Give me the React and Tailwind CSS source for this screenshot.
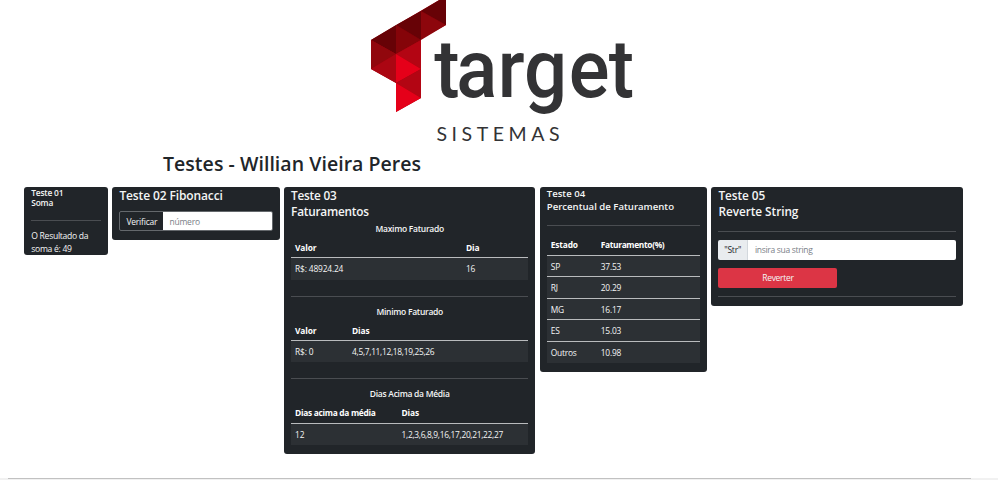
function Logo() {
  return (
    <svg className="block h-[150px] w-[270px]" viewBox="370 0 270 150" role="img" aria-label="target sistemas">
      <g shapeRendering="geometricPrecision">
        <path d="M371 40L446 -4V25L421 39V98L396 112V83L371 69Z" fill="#a3000f" />
        <path d="M371 40L396 25L396 54Z" fill="#670206" />
        <path d="M396 25L421 40L396 54Z" fill="#850409" />
        <path d="M396 25L421 11V40Z" fill="#670206" />
        <path d="M421 11L446 25L421 40Z" fill="#8d060c" />
        <path d="M421 11L446 -4V25Z" fill="#670206" />
        <path d="M371 40L396 54L371 69Z" fill="#91070d" />
        <path d="M371 69L396 54V83Z" fill="#ab0612" />
        <path d="M396 54L421 40V69Z" fill="#b30513" />
        <path d="M396 54L421 69L396 83Z" fill="#e50019" />
        <path d="M396 83L421 69V98Z" fill="#b30513" />
        <path d="M396 83L421 98L396 112Z" fill="#e50019" />
      </g>
      <text transform="scale(.94 1)" x="462 485.5 529.5 557.5 605 647.5" y="97.5" className="fill-[#333335] font-['Roboto',sans-serif] text-[81px] font-medium">target</text>
      <text x="436.5" y="141" textLength="123" lengthAdjust="spacing" className="fill-[#333335] font-['Lato',sans-serif] text-[19.5px]">SISTEMAS</text>
    </svg>
  );
}

function Card({ className, children }) {
  return <section className={`shrink-0 rounded-[3px] bg-[#212529] px-[7px] ${className}`}>{children}</section>;
}

function Report({ title, heads, values, first, last }) {
  return (
    <div className={last ? "" : "h-[82.8px]"}>
      <h3 className="h-[19px] text-center text-[8.5px] leading-[19px] font-semibold tracking-[-0.28px]">{title}</h3>
      <div className="flex h-[20.3px] border-b border-[#b9bbbd] pl-[4px] text-[8.4px] leading-[19px] font-bold tracking-[-0.14px] text-white">
        <span className={first}>{heads[0]}</span>
        <span>{heads[1]}</span>
      </div>
      <div className="flex h-[21.5px] bg-[#2c3034] pl-[4px] text-[8.4px] leading-[21px]">
        <span className={`tracking-[-0.16px] ${first}`}>{values[0]}</span>
        <span className="tracking-[-0.3px]">{values[1]}</span>
      </div>
      {!last && <hr className="mt-[16px] border-[#4a4d51]" />}
    </div>
  );
}

const states = [["SP", "37.53"], ["RJ", "20.29"], ["MG", "16.17"], ["ES", "15.03"], ["Outros", "10.98"]];

export default function App() {
  return (
    <main className="flex h-[480px] w-[998px] flex-col overflow-hidden bg-white font-['Open_Sans','Noto_Sans',sans-serif] text-[#f4f5f5]">
      <header className="h-[187px]">
        <div className="pl-[370px]"><Logo /></div>
        <h1 className="pl-[163px] text-[19.5px] leading-[27px] font-semibold tracking-[0.04px] text-[#212529]">Testes - Willian Vieira Peres</h1>
      </header>
      <div className="flex flex-1 items-start gap-[4.4px] pt-[0.4px] pl-[24.3px]">
        <Card className="h-[67.4px] w-[83.7px]">
          <h2 className="pt-[1px] text-[8.4px] leading-[10px] font-semibold tracking-[-0.2px]">Teste 01<br />Soma</h2>
          <hr className="mt-[12px] border-[#4a4d51]" />
          <p className="mt-[9px] text-[8.6px] leading-[12.5px] tracking-[-0.3px]">O Resultado da<br />soma é: 49</p>
        </Card>
        <Card className="h-[52.6px] w-[167.3px]">
          <h2 className="pt-[1px] text-[12px] leading-[16px] font-semibold tracking-[-0.12px]">Teste 02 Fibonacci</h2>
          <div className="mt-[6.5px] flex h-[20.5px] overflow-hidden rounded-[2px] border border-[#64686c] text-[8.5px] leading-[19px]">
            <button className="w-[43px] text-center tracking-[-0.2px]">Verificar</button>
            <input className="min-w-0 flex-1 bg-white px-[6px] tracking-[-0.2px] placeholder:text-[#7b8188]" placeholder="número" />
          </div>
        </Card>
        <Card className="h-[266.3px] w-[251.3px]">
          <h2 className="pt-[1px] text-[11.8px] leading-[15.2px] font-semibold tracking-[-0.22px]">Teste 03<br />Faturamentos</h2>
          <Report title="Maximo Faturado" heads={["Valor", "Dia"]} values={["R$: 48924.24", "16"]} first="w-[171px]" />
          <Report title="Minimo Faturado" heads={["Valor", "Dias"]} values={["R$: 0", "4,5,7,11,12,18,19,25,26"]} first="w-[57px]" />
          <Report title="Dias Acima da Média" heads={["Dias acima da média", "Dias"]} values={["12", "1,2,3,6,8,9,16,17,20,21,22,27"]} first="w-[106.5px] tracking-[-0.3px]" last />
        </Card>
        <Card className="h-[184.6px] w-[167.3px]">
          <h2 className="pt-[1px] text-[9.6px] leading-[12.5px] font-semibold">Teste 04<br />Percentual de Faturamento</h2>
          <hr className="mt-[11.7px] border-[#4a4d51]" />
          <div className="mt-[9px] flex h-[20.5px] border-b border-[#b9bbbd] pl-[4px] text-[8.4px] leading-[20px] font-bold tracking-[-0.15px] text-white">
            <span className="w-[50px]">Estado</span><span className="tracking-[-0.34px]">Faturamento(%)</span>
          </div>
          {states.map(([name, value]) => (
            <div key={name} className="flex h-[21.5px] border-b border-[#b9bbbd] bg-[#2c3034] pl-[4px] text-[8.4px] leading-[21px] tracking-[-0.2px] last:border-0">
              <span className="w-[50px]">{name}</span><span>{value}</span>
            </div>
          ))}
        </Card>
        <Card className="h-[118.4px] w-[251.2px]">
          <h2 className="pt-[1px] text-[11.8px] leading-[15.2px] font-semibold tracking-[-0.05px]">Teste 05<br />Reverte String</h2>
          <hr className="mt-[12px] border-[#4a4d51]" />
          <div className="mt-[8px] flex h-[20px] overflow-hidden rounded-[2px] text-[8.5px] leading-[20px]">
            <span className="w-[29.5px] border-r border-[#d3d8dd] bg-[#e9ecef] text-center tracking-[-0.2px] text-[#212529]">"Str"</span>
            <input className="min-w-0 flex-1 bg-white px-[7px] tracking-[-0.3px] placeholder:text-[#7b8188]" placeholder="insira sua string" />
          </div>
          <button className="mt-[8px] block h-[20px] w-[119px] rounded-[2px] bg-[#dc3545] text-[8.5px] leading-[20px] tracking-[-0.3px]">Reverter</button>
          <hr className="mt-[8px] border-[#4a4d51]" />
        </Card>
      </div>
      <div className="h-[2px] shrink-0 bg-[#f1f1f1] pr-[27px] pl-[8px]"><div className="h-px bg-[#c1c1c1]" /></div>
    </main>
  );
}
